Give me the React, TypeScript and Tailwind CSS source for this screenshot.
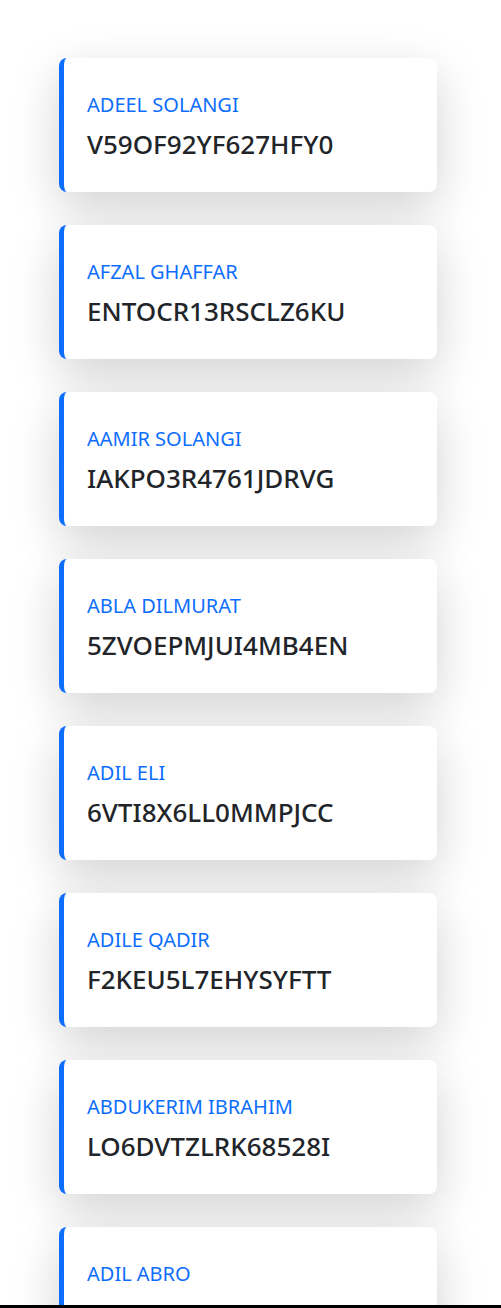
import React from 'react';

const people = [
  { name: 'ADEEL SOLANGI', code: 'V59OF92YF627HFY0' },
  { name: 'AFZAL GHAFFAR', code: 'ENTOCR13RSCLZ6KU' },
  { name: 'AAMIR SOLANGI', code: 'IAKPO3R4761JDRVG' },
  { name: 'ABLA DILMURAT', code: '5ZVOEPMJUI4MB4EN' },
  { name: 'ADIL ELI', code: '6VTI8X6LL0MMPJCC' },
  { name: 'ADILE QADIR', code: 'F2KEU5L7EHYSYFTT' },
  { name: 'ABDUKERIM IBRAHIM', code: 'LO6DVTZLRK68528I' },
  { name: 'ADIL ABRO', code: 'QX7HN2M4PLAE91KD' },
];

function Card({ name, code }: { name: string; code: string }) {
  return (
    <div className="w-[378px] h-[134px] rounded-lg border-l-[5px] border-[#0d6efd] bg-white pt-[33px] pl-[23px] pr-4 shadow-[0_1rem_3rem_rgba(0,0,0,0.175)]">
      <div className="text-[20px] leading-[28px] text-[#0d6efd]">{name}</div>
      <div className="mt-[7px] text-[26px] leading-[36px] font-medium text-[#212529]">{code}</div>
    </div>
  );
}

export default function App() {
  return (
    <div
      className="min-h-screen bg-white overflow-hidden"
      style={{ fontFamily: '"Noto Sans", "Open Sans", sans-serif' }}
    >
      <div className="ml-[59px] pt-[58px] flex flex-col gap-[33px]">
        {people.map((p) => (
          <Card key={p.name} name={p.name} code={p.code} />
        ))}
      </div>
      <div className="fixed bottom-0 left-0 right-0 h-[3px] bg-black" />
    </div>
  );
}
